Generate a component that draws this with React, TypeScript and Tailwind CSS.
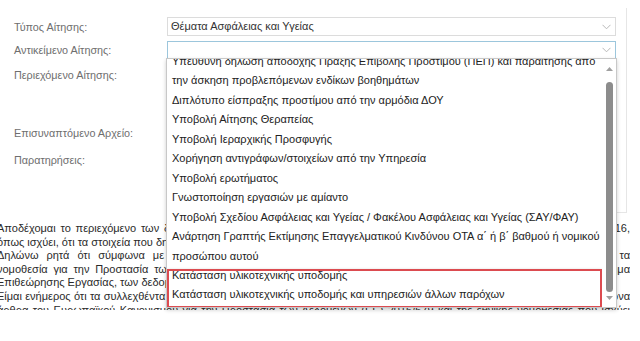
import React from "react";

const Chevron = () => (
  <svg width="9" height="6" viewBox="0 0 9 6" className="shrink-0">
    <polyline points="0.5,0.8 4.5,4.8 8.5,0.8" fill="none" stroke="#b8b8b8" strokeWidth="1" />
  </svg>
);

const items: string[][] = [
  ["Υπεύθυνη δήλωση αποδοχής Πράξης Επιβολής Προστίμου (ΠΕΠ) και παραίτησης από", "την άσκηση προβλεπόμενων ενδίκων βοηθημάτων"],
  ["Διπλότυπο είσπραξης προστίμου από την αρμόδια ΔΟΥ"],
  ["Υποβολή Αίτησης Θεραπείας"],
  ["Υποβολή Ιεραρχικής Προσφυγής"],
  ["Χορήγηση αντιγράφων/στοιχείων από την Υπηρεσία"],
  ["Υποβολή ερωτήματος"],
  ["Γνωστοποίηση εργασιών με αμίαντο"],
  ["Υποβολή Σχεδίου Ασφάλειας και Υγείας / Φακέλου Ασφάλειας και Υγείας (ΣΑΥ/ΦΑΥ)"],
  ["Ανάρτηση Γραπτής Εκτίμησης Επαγγελματικού Κινδύνου ΟΤΑ α΄ ή β΄ βαθμού ή νομικού", "προσώπου αυτού"],
];

const Item = ({ lines }: { lines: string[] }) => (
  <div className="pl-[5px] whitespace-nowrap">
    {lines.map((l, i) => (
      <div key={i}>{l}</div>
    ))}
  </div>
);

const J = "h-[13.6px] overflow-hidden text-justify [text-align-last:justify]";
const L = "h-[13.6px] overflow-hidden";

export default function App() {
  return (
    <div className="relative w-[640px] h-[341px] overflow-hidden bg-white font-['Liberation_Sans',Arial,sans-serif] text-[#333]">
      {/* form */}
      <div className="flex pt-[8px]">
        <div className="w-[167px] shrink-0 pl-[14px] pt-[9px] flex flex-col text-[10.8px] leading-[14px] text-[#6e6e6e]">
          <div className="h-[19px] flex items-center">Τύπος Αίτησης:</div>
          <div className="h-[18px] mt-[5px] flex items-center">Αντικείμενο Αίτησης:</div>
          <div className="h-[53px] mt-[6px] pt-[3px]">Περιεχόμενο Αίτησης:</div>
          <div className="h-[18px] mt-[6px] flex items-center">Επισυναπτόμενο Αρχείο:</div>
          <div className="h-[54px] mt-[8px] pt-[3px]">Παρατηρήσεις:</div>
        </div>
        <div className="w-[460px] shrink-0 pt-[9px] pr-[10px] pb-[8px] border-r border-b border-[#e6e6e6] flex flex-col">
          <div className="h-[19px] border border-[#dcdcdc] flex items-center justify-between pl-[3px] pr-[4px] text-[11px] text-[#333]">
            <span>Θέματα Ασφάλειας και Υγείας</span>
            <Chevron />
          </div>
          <div className="h-[18px] mt-[5px] border border-[#9cc6dc] flex items-center justify-end pr-[4px]">
            <Chevron />
          </div>
          <div className="h-[53px] mt-[6px] border border-[#dcdcdc]" />
          <div className="h-[18px] mt-[6px] border border-[#dcdcdc]" />
          <div className="h-[54px] mt-[8px] border border-[#dcdcdc]" />
        </div>
      </div>

      {/* paragraph */}
      <div className="mt-[9px] ml-[-3px] w-[633px] h-[88px] overflow-hidden text-[11px] leading-[13.6px] text-[#2a2a2a]">
        <p className={J}>Αποδέχομαι το περιεχόμενο των δηλώσεων της παρούσας αίτησης, τους όρους χρήσης της υπηρεσίας και του ν. 4624/2016,</p>
        <p className={L}>όπως ισχύει, ότι τα στοιχεία που δηλώνω είναι αληθή και ακριβή.</p>
        <p className={J}>Δηλώνω ρητά ότι σύμφωνα με τις διατάξεις της ισχύουσας εθνικής και ευρωπαϊκής νομοθεσίας και σύμφωνα με τα</p>
        <p className={J}>νομοθεσία για την Προστασία των Δεδομένων Προσωπικού Χαρακτήρα, συναινώ στην επεξεργασία από το αρμόδιο τμήμα</p>
        <p className={L}>Επιθεώρησης Εργασίας, των δεδομένων που περιλαμβάνονται στην παρούσα αίτηση.</p>
        <p className={J}>Είμαι ενήμερος ότι τα συλλεχθέντα δεδομένα προσωπικού χαρακτήρα θα τύχουν επεξεργασίας μόνο από την Υπηρεσία σύμφωνα με τα</p>
        <p className={J}>άρθρα του Ευρωπαϊκού Κανονισμού για την Προστασία των Δεδομένων (ΕΕ) 2016/679 και της εθνικής νομοθεσίας που ισχύει σήμερα</p>
      </div>

      {/* dropdown overlay */}
      <div className="absolute left-[166px] top-[58px] w-[451px] h-[250px] bg-white border border-[#c8c8c8] shadow-[0_2px_4px_rgba(0,0,0,0.2)] flex">
        <div className="flex-1 overflow-hidden text-[11px] leading-[19.45px] text-[#222]">
          <div className="mt-[-7px]">
            {items.map((it, i) => (
              <Item key={i} lines={it} />
            ))}
            <div className="relative">
              <div className="pl-[5px] whitespace-nowrap">Κατάσταση υλικοτεχνικής υποδομής</div>
              <div className="pl-[5px] whitespace-nowrap">Κατάσταση υλικοτεχνικής υποδομής και υπηρεσιών άλλων παρόχων</div>
              <div className="absolute left-0 right-0 top-[3px] bottom-[-3px] border-2 border-[#dc4b50] shadow-[0_1px_3px_rgba(0,0,0,0.25)]" />
            </div>
          </div>
        </div>
        <div className="w-[14px] shrink-0 flex flex-col items-center pt-[8px]">
          <svg width="7" height="4" viewBox="0 0 7 4"><polygon points="0,4 3.5,0 7,4" fill="#a0a0a0" /></svg>
          <div className="mt-[11px] w-[7px] h-[210px] rounded-full bg-[#8c8c8c]" />
          <svg className="mt-[4px]" width="7" height="4" viewBox="0 0 7 4"><polygon points="0,0 3.5,4 7,0" fill="#a0a0a0" /></svg>
        </div>
      </div>
    </div>
  );
}
